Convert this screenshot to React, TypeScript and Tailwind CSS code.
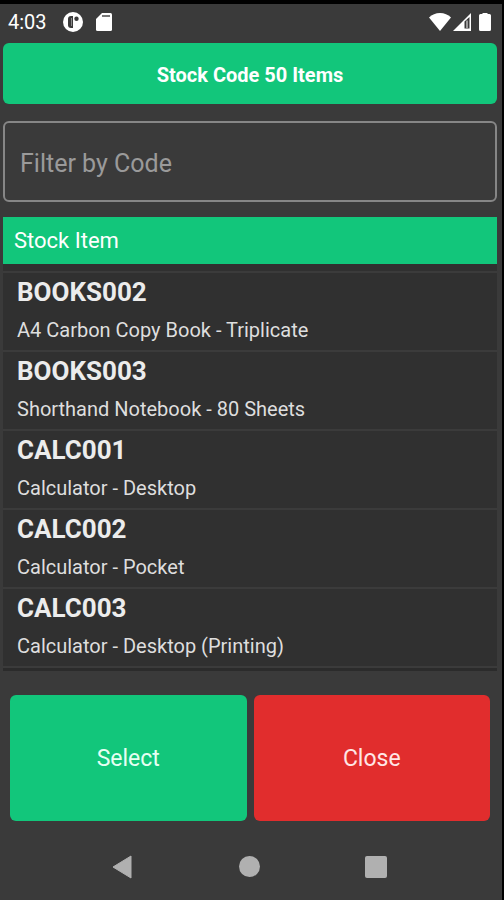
import { useState } from 'react';

interface StockItem {
  code: string;
  description: string;
}

const items: StockItem[] = [
  { code: 'BOOKS002', description: 'A4 Carbon Copy Book - Triplicate' },
  { code: 'BOOKS003', description: 'Shorthand Notebook - 80 Sheets' },
  { code: 'CALC001', description: 'Calculator - Desktop' },
  { code: 'CALC002', description: 'Calculator - Pocket' },
  { code: 'CALC003', description: 'Calculator - Desktop (Printing)' },
];

function StatusBar() {
  return (
    <div className="flex h-9 items-center justify-between px-2 text-white">
      <div className="flex items-center">
        <span className="text-xl leading-6">4:03</span>
        {/* App notification */}
        <svg className="ml-4 h-5 w-5" viewBox="0 0 20 20" aria-hidden="true">
          <circle cx="10" cy="10" r="10" fill="#fff" />
          <path d="M10 4v12H8q-3 0-3-3V7q0-3 3-3z" fill="#3a3a3a" />
          <path d="M8.5 6v8" stroke="#8a8a8a" strokeWidth="1" />
          <circle cx="13.5" cy="6.8" r="2.2" fill="#3a3a3a" />
        </svg>
        {/* SD card */}
        <svg className="ml-3 h-5 w-[18px]" viewBox="0 0 18 20" aria-hidden="true">
          <path d="M7 1h8.5Q17 1 17 2.5v15q0 1.5-1.5 1.5h-13Q1 19 1 17.5V7z" fill="#fff" />
          <path d="M7 4h8" stroke="#777" strokeWidth="2" />
        </svg>
      </div>

      <div className="flex items-center pr-[3px]">
        {/* Wifi */}
        <svg className="h-5 w-[22px]" viewBox="0 0 22 20" aria-hidden="true">
          <path d="M0 5.5Q4.500 1 11 1t11 4.500L11 19z" fill="#fff" />
        </svg>
        {/* Mobile signal */}
        <svg className="ml-0.5 h-5 w-[18px]" viewBox="0 0 18 20" aria-hidden="true">
          <path d="M18 1v18H0z" fill="#fff" />
          <path d="M11.5 9.5l5-4.5v11.5h-5z" fill="#3a3a3a" />
          <path d="M13 8.500h2V16h-2z" fill="#999" />
        </svg>
        {/* Battery */}
        <svg className="ml-2 h-5 w-3" viewBox="0 0 12 20" aria-hidden="true">
          <path d="M3.5 1h5v1h2Q12 2 12 3.500v14q0 1.500-1.500 1.500h-9Q0 19 0 17.500v-14Q0 2 1.500 2h2z" fill="#fff" />
        </svg>
      </div>
    </div>
  );
}

function NavigationBar() {
  return (
    <nav className="flex flex-1 items-center justify-between pt-3 pr-[115px] pl-28" aria-label="System">
      <button type="button" aria-label="Back">
        <svg className="h-6 w-[21px]" viewBox="0 0 21 24" aria-hidden="true">
          <path d="M1 12L19 1v22z" fill="#b0b0b0" stroke="#b0b0b0" strokeLinejoin="round" />
        </svg>
      </button>
      <button type="button" aria-label="Home">
        <span className="block h-[21px] w-[21px] rounded-full bg-[#b0b0b0]" />
      </button>
      <button type="button" aria-label="Recent apps">
        <span className="block h-[22px] w-[22px] rounded-xs bg-[#b0b0b0]" />
      </button>
    </nav>
  );
}

export default function App() {
  const [filter, setFilter] = useState('');
  const visible = items.filter((item) => item.code.toLowerCase().includes(filter.toLowerCase()));

  return (
    <div className="flex min-h-screen flex-col border-t-4 border-r-2 border-black bg-[#3a3a3a] font-[Roboto,sans-serif] text-white">
      <StatusBar />

      <main className="mt-[3px] flex flex-col pl-[3px] pr-[5px]">
        <button type="button" className="h-[61px] rounded-md bg-[#12c67b] pt-0.5 text-xl font-bold">
          Stock Code 50 Items
        </button>

        <input
          type="text"
          aria-label="Filter by Code"
          placeholder="Filter by Code"
          value={filter}
          onChange={(e) => setFilter(e.target.value)}
          className="mt-[17px] h-[81px] rounded-md border-2 border-[#868686] bg-transparent px-[15px] pt-1 text-[25px] text-white outline-none placeholder:text-[#9a9a9a]"
        />

        <section className="mt-[15px]">
          <h2 className="bg-[#12c67b] px-[11px] pt-2 pb-[7px] text-[22px] leading-8">Stock Item</h2>
          <ul className="border-b-3 border-[#2b2b2b] bg-[#303030] pt-[7px]">
            {visible.map((item) => (
              <li key={item.code} className="h-[79px] border-t-2 border-[#3b3b3b] px-3.5 pt-[3px]">
                <p className="text-[26px] leading-8 font-bold text-[#ececec]">{item.code}</p>
                <p className="mt-1.5 text-xl leading-8 text-[#dedede]">{item.description}</p>
              </li>
            ))}
            <li className="border-t-2 border-[#3b3b3b]" aria-hidden="true" />
          </ul>
        </section>

        <div className="mt-6 grid grid-cols-2 gap-[7px] px-[7px]">
          <button type="button" className="h-[126px] rounded-md bg-[#12c67b] pt-0.5 text-[23px] text-[#e6fff2]">
            Select
          </button>
          <button type="button" className="h-[126px] rounded-md bg-[#e12d2d] pt-0.5 text-[23px] text-[#ffe6e6]">
            Close
          </button>
        </div>
      </main>

      <NavigationBar />
    </div>
  );
}
